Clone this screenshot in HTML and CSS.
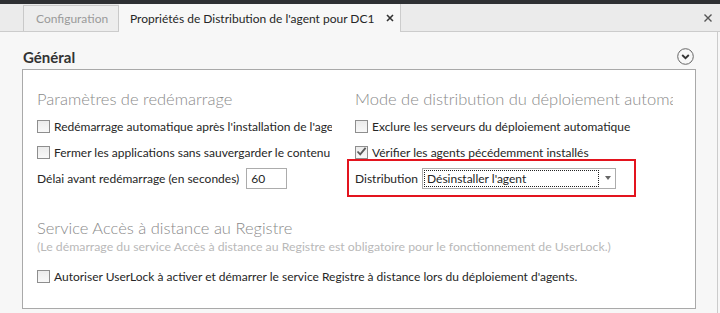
FILE: index.html
```html
<!DOCTYPE html>
<html lang="fr">
<head>
    <meta charset="UTF-8">
    <meta name="viewport" content="width=device-width, initial-scale=1.0">
    <title>Propriétés de Distribution de l'agent pour DC1</title>
    <link rel="stylesheet" href="styles.css">
</head>
<body>
    <div class="topbar"></div>

    <!-- Onglets -->
    <div class="tabstrip">
        <div class="tab tab-inactive">Configuration</div>
        <div class="tab tab-active">
            <span>Propriétés de Distribution de l'agent pour DC1</span>
            <svg class="tab-close" width="8" height="8" viewBox="0 0 8 8"><path d="M1 1L7 7M7 1L1 7" stroke="#333" stroke-width="1.6"/></svg>
        </div>
        <svg class="window-close" width="8" height="8" viewBox="0 0 8 8"><path d="M0.5 0.5L7.5 7.5M7.5 0.5L0.5 7.5" stroke="#555" stroke-width="1.4"/></svg>
    </div>

    <div class="content">
        <div class="section-header">
            <span class="section-title">Général</span>
            <svg class="collapse-icon" width="17" height="17" viewBox="0 0 17 17">
                <circle cx="8.5" cy="8.5" r="7.8" fill="none" stroke="#666" stroke-width="1"/>
                <path d="M5.2 7L8.5 10.2L11.8 7" fill="none" stroke="#333" stroke-width="1.8"/>
            </svg>
        </div>

        <div class="panel">
            <div class="columns">
                <!-- Paramètres de redémarrage -->
                <div class="column column-left">
                    <div class="group-title">Paramètres de redémarrage</div>
                    <div class="check-row"><span class="checkbox"></span>Redémarrage automatique après l'installation de l'agent</div>
                    <div class="check-row"><span class="checkbox"></span>Fermer les applications sans sauvergarder le contenu</div>
                    <div class="field-row">
                        <span>Délai avant redémarrage (en secondes)</span>
                        <span class="text-input">60</span>
                    </div>
                </div>

                <!-- Mode de distribution -->
                <div class="column column-right">
                    <div class="group-title">Mode de distribution du déploiement automatique</div>
                    <div class="check-row"><span class="checkbox"></span>Exclure les serveurs du déploiement automatique</div>
                    <div class="check-row">
                        <span class="checkbox checked">
                            <svg width="11" height="11" viewBox="0 0 11 11"><path d="M1.5 5.5L4.2 8.3L9.6 1.8" fill="none" stroke="#5a5a5a" stroke-width="1.8"/></svg>
                        </span>Vérifier les agents pécédemment installés
                    </div>
                    <div class="highlight">
                        <div class="field-row">
                            <span class="field-label">Distribution</span>
                            <div class="select">
                                <span class="select-value">Désinstaller l'agent</span>
                                <span class="select-arrow"></span>
                            </div>
                        </div>
                    </div>
                </div>
            </div>

            <!-- Service Accès à distance au Registre -->
            <div class="group">
                <div class="group-title">Service Accès à distance au Registre</div>
                <div class="group-note">(Le démarrage du service Accès à distance au Registre est obligatoire pour le fonctionnement de UserLock.)</div>
                <div class="check-row"><span class="checkbox"></span>Autoriser UserLock à activer et démarrer le service Registre à distance lors du déploiement d'agents.</div>
            </div>
        </div>
    </div>
</body>
</html>
```

FILE: styles.css
```css
/* Ogólne ustawienia */
body {
    font-family: Lato, "Noto Sans", sans-serif;
    font-size: 12px;
    color: #262626;
    margin: 0;
    padding: 0;
    background-color: #f7f7f7;
    overflow: hidden;
}

.topbar {
    height: 4px;
    background-color: #2e3033;
}

/* Onglets */
.tabstrip {
    display: flex;
    align-items: stretch;
    height: 27px;
    padding-left: 23px;
    background-color: #ebebeb;
    border-bottom: 1px solid #cccccc;
}

.tab {
    display: flex;
    align-items: center;
    box-sizing: border-box;
}

.tab-inactive {
    width: 96px;
    margin-top: 1px;
    padding-left: 12px;
    color: #9a9a9a;
    background-color: #ededed;
    border: 1px solid #c9c9c9;
    border-bottom: none;
}

.tab-active {
    width: 282px;
    height: 28px;
    padding-left: 11px;
    background-color: #f7f7f7;
    border-right: 1px solid #cccccc;
    gap: 12px;
}

.tab-close {
    flex: none;
}

.window-close {
    margin-left: auto;
    margin-right: 8px;
    align-self: center;
}

/* Zawartość */
.content {
    width: 717px;
    padding-top: 13px;
    padding-bottom: 4px;
    border-right: 1px solid #cccccc;
}

.section-header {
    display: flex;
    justify-content: space-between;
    align-items: center;
    height: 24px;
    margin: 0 23px 0 23px;
}

.section-title {
    font-size: 15px;
    font-weight: bold;
    color: #333333;
}

.collapse-icon {
    margin-top: -2px;
}

.panel {
    margin: 0 21px 0 22px;
    height: 240px;
    box-sizing: border-box;
    padding: 18px 0 0 14px;
    background-color: #ffffff;
    border: 1px solid #a9a9a9;
}

.columns {
    display: flex;
    gap: 23px;
}

.column-left {
    width: 295px;
}

.column-right {
    width: 318px;
}

.group-title {
    height: 22px;
    line-height: 22px;
    font-size: 16.5px;
    font-weight: 300;
    color: #8a8a8a;
    white-space: nowrap;
    overflow: hidden;
}

.column .group-title {
    margin-bottom: 3px;
}

.check-row,
.field-row {
    display: flex;
    align-items: center;
    height: 26px;
    white-space: nowrap;
    overflow: hidden;
}

.checkbox {
    flex: none;
    width: 13px;
    height: 13px;
    box-sizing: border-box;
    margin-right: 4px;
    border: 1px solid #8e8e8e;
    background: linear-gradient(#ebebeb, #f8f8f8);
    display: flex;
    align-items: center;
    justify-content: center;
}

.checkbox.checked svg {
    margin-top: -1px;
}

.text-input {
    width: 41px;
    height: 21px;
    box-sizing: border-box;
    margin-left: 7px;
    padding-left: 4px;
    line-height: 19px;
    border: 1px solid #acacac;
    background-color: #ffffff;
}

/* Zaznaczenie "Distribution" */
.highlight {
    width: 289px;
    box-sizing: border-box;
    margin: -6px 0 -6px -8px;
    padding: 4px 0 4px 6px;
    border: 2px solid #e3141e;
}

.field-label {
    width: 67px;
}

.select {
    display: flex;
    align-items: center;
    width: 194px;
    height: 21px;
    box-sizing: border-box;
    padding: 1px;
    border: 1px solid #acacac;
    background-color: #ffffff;
}

.select-value {
    width: 175px;
    height: 17px;
    box-sizing: border-box;
    padding-left: 2px;
    line-height: 15px;
    border: 1px dotted #222222;
}

.select-arrow {
    margin-left: 6px;
    width: 0;
    height: 0;
    border-left: 3.5px solid transparent;
    border-right: 3.5px solid transparent;
    border-top: 4px solid #666666;
}

/* Sekcja rejestru */
.group {
    margin-top: 26px;
}

.group-note {
    height: 16px;
    line-height: 16px;
    font-size: 12.3px;
    color: #b9b9b9;
    margin-bottom: 8px;
    white-space: nowrap;
}
```
